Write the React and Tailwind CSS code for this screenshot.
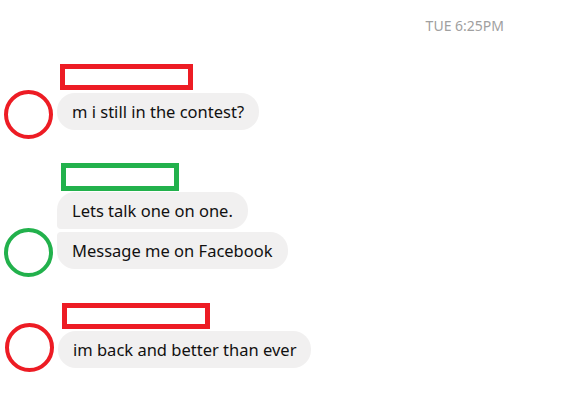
const font = { fontFamily: '"Noto Sans", "Open Sans", sans-serif' }

function Avatar({ color, className }) {
  return <div className={`h-[49px] w-[49px] shrink-0 rounded-full border-[4px] ${color} ${className}`} />
}

function NameBox({ color, className }) {
  return <div className={`border-[5px] ${color} ${className}`} />
}

function Bubble({ children, shape = 'rounded-[18px]' }) {
  return (
    <div className={`w-fit bg-[#f1f0f0] px-[15px] py-[7px] text-[16.5px] leading-[23px] text-[#111] ${shape}`}>
      {children}
    </div>
  )
}

export default function App() {
  return (
    <div className="h-[404px] w-[561px] bg-white" style={font}>
      <div className="flex justify-end pr-[57px] pt-[18px] text-[14px] leading-[16px] text-[#a0a0a0]">
        TUE 6:25PM
      </div>

      {/* first message */}
      <NameBox color="border-[#ed1c24]" className="ml-[60px] mt-[30px] h-[26px] w-[133px]" />
      <div className="mt-[3px] flex items-end">
        <Avatar color="border-[#ed1c24]" className="ml-[4px] -mt-[30px] -mb-[9px]" />
        <div className="ml-[4px]">
          <Bubble>m i still in the contest?</Bubble>
        </div>
      </div>

      {/* second message */}
      <NameBox color="border-[#22b14c]" className="ml-[61px] mt-[33px] h-[28px] w-[118px]" />
      <div className="mt-[1px] flex items-end">
        <Avatar color="border-[#22b14c]" className="ml-[4px] -mt-[30px] -mb-[8px]" />
        <div className="ml-[4px] flex flex-col gap-[3px]">
          <Bubble shape="rounded-[18px] rounded-bl-[4px]">Lets talk one on one.</Bubble>
          <Bubble shape="rounded-[18px] rounded-tl-[4px]">Message me on Facebook</Bubble>
        </div>
      </div>

      {/* third message */}
      <NameBox color="border-[#ed1c24]" className="ml-[62px] mt-[34px] h-[26px] w-[148px]" />
      <div className="mt-[2px] flex items-end">
        <Avatar color="border-[#ed1c24]" className="ml-[5px] -mt-[30px] -mb-[4px]" />
        <div className="ml-[4px]">
          <Bubble>im back and better than ever</Bubble>
        </div>
      </div>
    </div>
  )
}
